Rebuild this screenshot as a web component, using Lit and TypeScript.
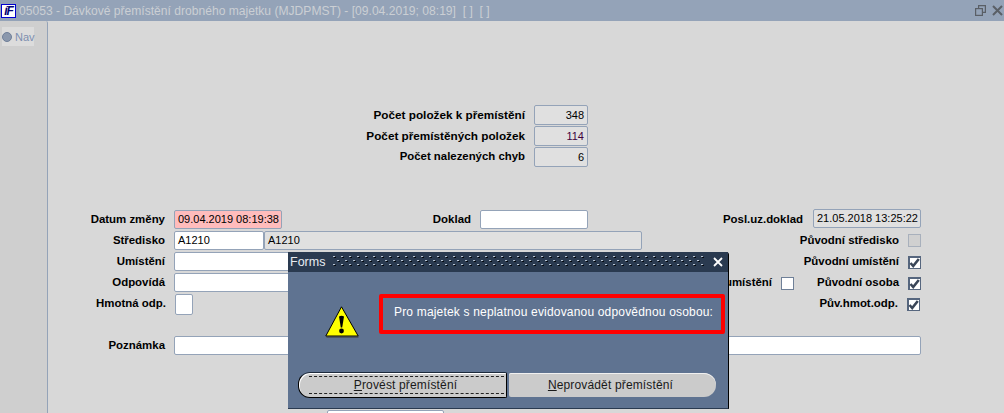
import { LitElement, html, css, svg } from "lit";
import { customElement } from "lit/decorators.js";

const check = svg`<svg width="11" height="11" viewBox="0 0 11 11"><path d="M1.5 6 L4.2 9 L9.8 2" fill="none" stroke="#3a4658" stroke-width="2.6"/></svg>`;

@customElement("app-root")
export class AppRoot extends LitElement {
  static styles = css`
    :host { display: block; width: 1004px; height: 413px; overflow: hidden; position: relative; background: #d8d8d8; font-family: "Liberation Sans", Arial, sans-serif; font-size: 12px; color: #000; }
    .titlebar { height: 21px; background: #94a3b8; display: flex; align-items: center; color: #cbcfd4; font-size: 12.1px; }
    .logo { width: 15px; height: 14px; margin: 0 3px 0 1px; box-sizing: border-box; background: #fff; border: 1px solid #0000d0; color: #000070; font: italic bold 12px/12px "Liberation Sans", sans-serif; text-align: center; letter-spacing: -1px; flex: none; }
    .ttl { flex: 1; white-space: pre; }
    .winbtns { display: flex; gap: 6px; align-items: center; padding-right: 1px; }
    .body { display: flex; height: 392px; overflow: hidden; }
    .nav { width: 45px; flex: none; background: #cfcfcf; border-right: 1px solid #94a3b8; border-top-right-radius: 2px; padding: 6px 0 0 2px; }
    .navitem { width: 32px; height: 19px; background: #dcdcdc; display: flex; align-items: center; gap: 3px; color: #7d8fb0; font-size: 11px; }
    .radio { box-sizing: border-box; width: 10px; height: 10px; border-radius: 50%; background: #8b98ad; border: 1px solid #6f7f99; flex: none; }
    .canvas { flex: 1; display: flex; flex-direction: column; padding-top: 84px; font-weight: bold; font-size: 11.45px; }
    .sum { display: flex; flex: none; height: 21px; align-items: flex-start; }
    .lab { text-align: right; white-space: nowrap; line-height: 19px; flex: none; }
    .f { box-sizing: border-box; height: 19px; border: 1px solid #94a3b8; border-radius: 2px; background: #fff; font-weight: normal; font-size: 11px; line-height: 17px; padding: 0 3px; white-space: nowrap; flex: none; }
    .ro { background: #e0e0e0; }
    .num { text-align: right; }
    .sum .lab { width: 477px; font-size: 11.75px; }
    .sum .lab.tight { font-size: 11.4px; }
    .sum .f { margin-left: 9px; width: 54px; height: 20px; line-height: 19px; }
    .purple { color: #400040; }
    .rows { flex: none; margin-top: 42px; display: flex; flex-direction: column; }
    .row { display: flex; flex: none; height: 21px; align-items: flex-start; }
    .l1 { width: 117px; margin-right: 9px; }
    .pink { background: #ffbcbc; }
    .cb { box-sizing: border-box; width: 13px; height: 13px; margin: 4px 0 0 9px; border: 1px solid #6f8098; background: #fff; flex: none; display: flex; align-items: center; justify-content: center; }
    .cb.on { border-color: #56667e; box-shadow: inset 1px 1px 0 #56667e; }
    .cb.off { background: #d0d0d0; border-color: #a8b0bc; margin-top: 3px; }
    .rowgap { height: 21px; flex: none; }
    .rowlast { margin-top: 53px; padding-left: 279px; }
    .dialog { position: absolute; left: 288px; top: 252px; width: 441px; height: 157px; box-sizing: border-box; background: #5f7391; border-right: 1px solid #000; border-bottom: 1px solid #2a3a50; border-top-right-radius: 3px; color: #fff; font-size: 12px; display: flex; flex-direction: column; }
    .dtitle { height: 20px; background: #2a3a50; display: flex; align-items: center; padding: 0 5px 0 2px; gap: 8px; font-size: 12.5px; color: #e8ecf0; flex: none; }
    .dots { flex: 1; height: 12px; display: block; }
    .dmain { flex: 1; display: flex; align-items: flex-start; padding: 22px 3px 0 37px; }
    .warn { margin-top: 12px; flex: none; }
    .msg { box-sizing: border-box; margin-left: 20px; width: 346px; height: 40px; border: 4px solid #f00; border-radius: 2px; padding: 0 0 0 11px; line-height: 29px; letter-spacing: 0.18px; white-space: nowrap; }
    .btns { display: flex; padding: 0 0 10px 10px; gap: 2px; align-items: flex-start; color: #1a1a1a; }
    .btn { box-sizing: border-box; background: #cbcbcb; display: flex; align-items: center; justify-content: center; position: relative; letter-spacing: 0.15px; }
    .b1 { width: 209px; height: 26px; border: 1px solid #000; border-top-color: #1c2a3c; border-radius: 12px 2px 2px 12px; padding-left: 6px; box-shadow: inset 1px 1px 0 #fff; }
    .b1::after { content: ""; position: absolute; left: 10px; right: 2px; top: 3px; bottom: 3px; border-top: 1px dashed #222; border-bottom: 1px dashed #222; }
    .b2 { width: 207px; height: 24px; margin-top: 1px; border-radius: 2px 12px 12px 2px; padding-right: 4px; box-shadow: inset 0 1px 0 #f0f0f0; }
  `;

  render() {
    return html`
      <div class="titlebar">
        <div class="logo">íF</div>
        <div class="ttl">05053 - Dávkové přemístění drobného majetku (MJDPMST) - [09.04.2019; 08:19]  [ ]  [ ]</div>
        <div class="winbtns">
          <svg width="11" height="11" viewBox="0 0 11 11" fill="none" stroke="#5a5f66" stroke-width="1.2"><rect x="0.6" y="3.6" width="6.8" height="6.8"/><path d="M3.6 3.6V0.6H10.4V7.4H7.4"/></svg>
          <svg width="11" height="11" viewBox="0 0 11 11" stroke="#5a5f66" stroke-width="2"><path d="M1 1L10 10M10 1L1 10"/></svg>
        </div>
      </div>
      <div class="body">
        <div class="nav"><div class="navitem"><span class="radio"></span>Nav</div></div>
        <div class="canvas">
          <div class="sum"><div class="lab">Počet položek k přemístění</div><div class="f ro num">348</div></div>
          <div class="sum"><div class="lab">Počet přemístěných položek</div><div class="f ro num purple">114</div></div>
          <div class="sum"><div class="lab tight">Počet nalezených chyb</div><div class="f ro num">6</div></div>
          <div class="rows">
            <div class="row">
              <div class="lab l1">Datum změny</div><div class="f pink" style="width:108px">09.04.2019 08:19:38</div>
              <div class="lab" style="width:189px">Doklad</div><div class="f" style="width:108px;margin-left:9px"></div>
              <div class="lab" style="width:215px">Posl.uz.doklad</div><div class="f ro" style="width:108px;margin-left:10px;margin-top:-1px">21.05.2018 13:25:22</div>
            </div>
            <div class="row">
              <div class="lab l1">Středisko</div><div class="f" style="width:90px">A1210</div><div class="f ro" style="width:378px">A1210</div>
              <div class="lab" style="width:257px">Původní středisko</div><div class="cb off"></div>
            </div>
            <div class="row">
              <div class="lab l1">Umístění</div><div class="f" style="width:468px"></div>
              <div class="lab" style="width:257px">Původní umístění</div><div class="cb on">${check}</div>
            </div>
            <div class="row">
              <div class="lab l1">Odpovídá</div><div class="f" style="width:468px"></div>
              <div class="lab" style="width:130px">Nové umístění</div><div class="cb"></div>
              <div class="lab" style="width:105px">Původní osoba</div><div class="cb on">${check}</div>
            </div>
            <div class="row">
              <div class="lab l1" style="width:118px">Hmotná odp.</div><div class="f" style="width:18px;height:21px"></div>
              <div class="lab" style="width:705px">Pův.hmot.odp.</div><div class="cb on" style="margin-left:9px">${check}</div>
            </div>
            <div class="rowgap"></div>
            <div class="row">
              <div class="lab l1">Poznámka</div><div class="f" style="width:747px"></div>
            </div>
            <div class="row rowlast"><div class="f" style="width:117px"></div></div>
          </div>
        </div>
      </div>
      <div class="dialog">
        <div class="dtitle"><span>Forms</span>
          <svg class="dots" height="12">
            <defs><pattern id="dp" width="8" height="8" patternUnits="userSpaceOnUse">
              <rect x="0" y="0" width="2" height="1" fill="#b8c4d2"/><rect x="1" y="1" width="2" height="1" fill="#05090f"/>
              <rect x="4" y="4" width="2" height="1" fill="#b8c4d2"/><rect x="5" y="5" width="2" height="1" fill="#05090f"/>
            </pattern></defs>
            <rect width="100%" height="12" fill="url(#dp)"/>
          </svg>
          <svg width="10" height="10" viewBox="0 0 10 10" stroke="#fff" stroke-width="1.8"><path d="M1 1L9 9M9 1L1 9"/></svg>
        </div>
        <div class="dmain">
          <svg class="warn" width="34" height="32" viewBox="0 0 34 32">
            <path d="M16.5 0.8L33.2 30H0.8Z" fill="#ffff00" stroke="#000" stroke-width="1" stroke-linejoin="round"/>
            <path d="M1.5 31H33.5" stroke="#3a3a30" stroke-width="1"/>
            <path d="M14 10.5q2.5-1.5 5 0l-1.8 11h-1.4Z" fill="#000"/><circle cx="16.5" cy="25" r="2.4" fill="#000"/>
          </svg>
          <div class="msg">Pro majetek s neplatnou evidovanou odpovědnou osobou:</div>
        </div>
        <div class="btns">
          <div class="btn b1"><span><u>P</u>rovést přemístění</span></div>
          <div class="btn b2"><span><u>N</u>eprovádět přemístění</span></div>
        </div>
      </div>
    `;
  }
}
